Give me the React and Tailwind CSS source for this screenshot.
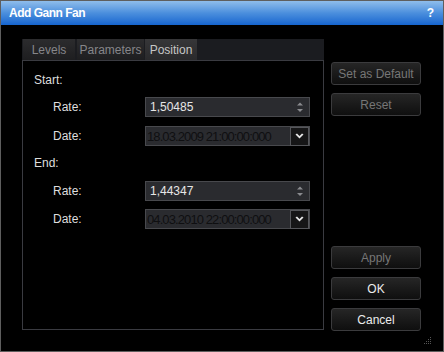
import React from "react";

const font = { fontFamily: '"Liberation Sans", Arial, sans-serif' };

function Spinner() {
  return (
    <svg width="8" height="14" viewBox="0 0 8 14" className="shrink-0">
      <path d="M4 2.5 L7 5.5 L1 5.5 Z" fill="#8a8b8f" />
      <path d="M1 9 L7 9 L4 12 Z" fill="#8a8b8f" />
    </svg>
  );
}

function RateInput({ value }) {
  return (
    <div className="flex h-[20px] w-[165px] items-center justify-between border border-[#48494d] bg-[#2a2b2f] pl-[4px] pr-[5px]">
      <span className="text-[12px] leading-none text-[#e6e6e6]">{value}</span>
      <Spinner />
    </div>
  );
}

function DateInput({ value }) {
  return (
    <div className="flex h-[20px] w-[165px] items-center justify-between border border-[#48494d] bg-[#2a2b2f] pl-[1px] pr-0">
      <span className="whitespace-nowrap text-[13px] leading-none tracking-[-0.9px] text-[#0f0f11]">{value}</span>
      <div className="flex h-[19px] w-[19px] shrink-0 items-center justify-center border border-[#55565a] bg-[#161617]">
        <svg width="9" height="7" viewBox="0 0 9 7">
          <path d="M0.5 1.5 L2 0.5 L4.5 3 L7 0.5 L8.5 1.5 L4.5 5.5 Z" fill="#e8e8e8" />
        </svg>
      </div>
    </div>
  );
}

function Row({ label, children }) {
  return (
    <div className="flex h-[20px] items-center">
      <span className="ml-[19px] w-[92px] text-[12px] leading-none text-[#dedede]">{label}</span>
      {children}
    </div>
  );
}

function Btn({ children, disabled }) {
  return (
    <div
      className={
        "flex h-[23px] w-[90px] items-center justify-center rounded-[3px] border border-[#3b3b3d] bg-gradient-to-b from-[#262626] to-[#0f0f0f] text-[12px] leading-none " +
        (disabled ? "text-[#767676]" : "text-[#ececec]")
      }
    >
      {children}
    </div>
  );
}

export default function App() {
  return (
    <div
      className="relative flex h-[352px] w-[444px] flex-col border border-[#5e5e5e] bg-black"
      style={font}
    >
      <div className="flex h-[24px] items-center justify-between bg-gradient-to-b from-[#8fbdeb] via-[#4b8fdd] to-[#1565cf] pl-[8px] pr-[9px]">
        <span className="text-[12px] font-bold leading-none tracking-[-0.5px] text-white">Add Gann Fan</span>
        <span className="text-[12px] font-bold leading-none text-white">?</span>
      </div>
      <div className="flex items-start">
        <div className="ml-[21px] mt-[14px] flex w-[302px] flex-col">
          <div className="flex h-[21px] gap-[2px] bg-[#1b1c20] pl-[1px]">
            <div className="flex w-[52px] items-center justify-center bg-gradient-to-b from-[#2c2c2e] to-[#1e1e20] text-[12px] leading-none text-[#86868a]">Levels</div>
            <div className="flex w-[67px] items-center justify-center bg-gradient-to-b from-[#2c2c2e] to-[#1e1e20] text-[12px] leading-none text-[#86868a]">Parameters</div>
            <div className="-ml-[1px] flex w-[52px] items-center justify-center bg-gradient-to-b from-[#363638] to-[#2a2a2c] text-[12px] leading-none text-[#c6c6c6]">Position</div>
          </div>
          <div className="flex h-[270px] flex-col border border-[#3a3b41] pl-[11px]">
            <div className="mt-[9px] flex h-[20px] items-center text-[12px] leading-none text-[#dedede]">Start:</div>
            <div className="mt-[7px]">
              <Row label="Rate:"><RateInput value="1,50485" /></Row>
            </div>
            <div className="mt-[9px]">
              <Row label="Date:"><DateInput value="18.03.2009 21:00:00:000" /></Row>
            </div>
            <div className="mt-[7px] flex h-[20px] items-center text-[12px] leading-none text-[#dedede]">End:</div>
            <div className="mt-[8px]">
              <Row label="Rate:"><RateInput value="1,44347" /></Row>
            </div>
            <div className="mt-[8px]">
              <Row label="Date:"><DateInput value="04.03.2010 22:00:00:000" /></Row>
            </div>
          </div>
        </div>
        <div className="ml-[7px] mt-[37px] flex flex-col">
          <Btn disabled>Set as Default</Btn>
          <div className="mt-[8px]"><Btn disabled>Reset</Btn></div>
          <div className="mt-[130px]"><Btn disabled>Apply</Btn></div>
          <div className="mt-[8px]"><Btn>OK</Btn></div>
          <div className="mt-[8px]"><Btn>Cancel</Btn></div>
        </div>
      </div>
      <svg className="absolute bottom-[6px] right-[11px]" width="8" height="8" viewBox="0 0 8 8">
        <rect x="6" y="0" width="1" height="1" fill="#555" />
        <rect x="4" y="2" width="1" height="1" fill="#555" />
        <rect x="6" y="2" width="1" height="1" fill="#555" />
        <rect x="2" y="4" width="1" height="1" fill="#555" />
        <rect x="4" y="4" width="1" height="1" fill="#555" />
        <rect x="6" y="4" width="1" height="1" fill="#555" />
        <rect x="0" y="6" width="1" height="1" fill="#555" />
        <rect x="2" y="6" width="1" height="1" fill="#555" />
        <rect x="4" y="6" width="1" height="1" fill="#555" />
        <rect x="6" y="6" width="1" height="1" fill="#555" />
      </svg>
    </div>
  );
}
